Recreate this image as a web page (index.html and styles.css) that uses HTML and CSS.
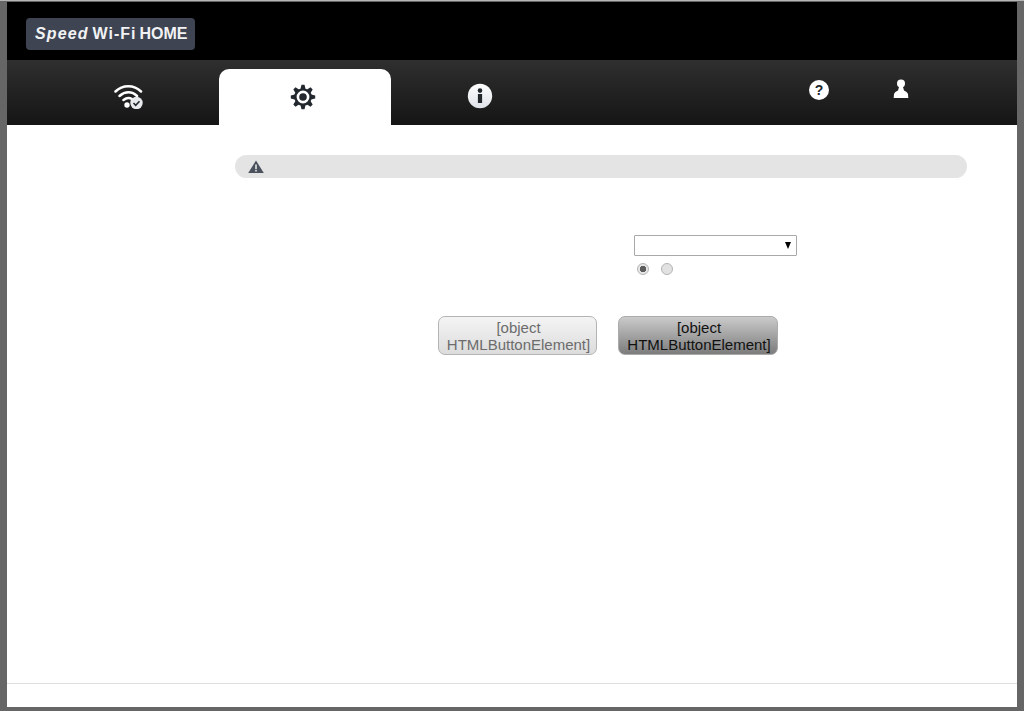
FILE: index.html
```html
<!DOCTYPE html>
<html lang="ja">
<head>
<meta charset="utf-8">
<title>Speed Wi-Fi HOME</title>
<link rel="stylesheet" href="styles.css">
</head>
<body>
<div class="frame">
  <header class="masthead">
    <div class="logo"><em class="logo-speed">Speed</em><span class="logo-wifi">Wi-Fi</span><span class="logo-home">HOME</span></div>
  </header>
  <nav class="nav">
    <a class="tab">
      <svg class="icon-wifi" width="30" height="26" viewBox="0 0 30 26">
        <path d="M1.500 8.500C8.500 1.500 20 1.500 27 8.500M5.500 13C11 8 18 8 23 13M9.500 17C12.500 14.500 15.500 14.500 18 16" fill="none" stroke="#fff" stroke-width="2.500" stroke-linecap="round"/>
        <circle cx="13" cy="22" r="2.700" fill="#fff"/>
        <circle cx="22.500" cy="20" r="6.200" fill="#e8eaee"/>
        <path d="M19.500 20l2.200 2.300 3.800-4" fill="none" stroke="#23262b" stroke-width="1.600"/>
      </svg>
    </a>
    <a class="tab tab-active">
      <svg class="icon-gear" width="26" height="26" viewBox="0 0 26 26">
        <g fill="#23272e">
          <path d="M11.500 .8h3l1.200 5h-5.400z"/>
          <path d="M11.500 .8h3l1.200 5h-5.400z" transform="rotate(45 13 13)"/>
          <path d="M11.500 .8h3l1.200 5h-5.400z" transform="rotate(90 13 13)"/>
          <path d="M11.500 .8h3l1.200 5h-5.400z" transform="rotate(135 13 13)"/>
          <path d="M11.500 .8h3l1.200 5h-5.400z" transform="rotate(180 13 13)"/>
          <path d="M11.500 .8h3l1.200 5h-5.400z" transform="rotate(225 13 13)"/>
          <path d="M11.500 .8h3l1.200 5h-5.400z" transform="rotate(270 13 13)"/>
          <path d="M11.500 .8h3l1.200 5h-5.400z" transform="rotate(315 13 13)"/>
        </g>
        <circle cx="13" cy="13" r="7.600" fill="#fff" stroke="#23272e" stroke-width="2.400"/>
        <circle cx="13" cy="13" r="3.800" fill="#23272e"/>
      </svg>
    </a>
    <a class="tab tab-info">
      <svg width="26" height="26" viewBox="0 0 26 26">
        <defs><linearGradient id="ig" x1="0" y1="0" x2="0" y2="1"><stop offset="0" stop-color="#fff"/><stop offset="1" stop-color="#dfe2ea"/></linearGradient></defs>
        <circle cx="13" cy="13" r="12.200" fill="url(#ig)"/>
        <circle cx="13" cy="7.600" r="2.300" fill="#23262b"/>
        <rect x="10.900" y="11" width="4.200" height="9" fill="#23262b"/>
      </svg>
    </a>
    <div class="nav-tools">
      <a class="tool tool-help">
        <svg width="22" height="22" viewBox="0 0 22 22">
          <circle cx="11" cy="11" r="10" fill="#fff"/>
          <text class="help-mark" x="11" y="15.600" text-anchor="middle">?</text>
        </svg>
      </a>
      <a class="tool tool-user">
        <svg width="16" height="20" viewBox="0 0 16 20">
          <circle cx="8" cy="4.600" r="4" fill="#fff"/>
          <path d="M6 8h4l1 3.600c2 .8 3.400 2 4 3.400l.3 4H.7l.3-4c.6-1.400 2-2.600 4-3.400z" fill="#fff"/>
        </svg>
      </a>
    </div>
  </nav>
  <main class="main">
    <div class="notice">
      <svg width="16" height="13" viewBox="0 0 16 13">
        <path d="M8 .5 15.800 13H.2z" fill="#4b525e"/>
        <rect x="7.200" y="4.500" width="1.600" height="4.500" fill="#e4e4e4"/>
        <rect x="7.200" y="9.800" width="1.600" height="1.700" fill="#e4e4e4"/>
      </svg>
    </div>
    <div class="form">
      <div class="select"><span class="select-arrow"></span></div>
      <div class="radios">
        <span class="radio radio-on"></span>
        <span class="radio"></span>
      </div>
    </div>
    <div class="actions">
      <button class="btn btn-light" type="button">[object HTMLButtonElement]</button>
      <button class="btn btn-dark" type="button">[object HTMLButtonElement]</button>
    </div>
    <div class="spacer"></div>
    <footer class="footer"></footer>
  </main>
</div>
</body>
</html>
```
FILE: styles.css
```css
* { box-sizing: border-box; }
html, body { margin: 0; height: 100%; }
body { background: #666; font-family: "Liberation Sans", Arial, sans-serif; overflow: hidden; }
.frame {
  height: 711px;
  padding: 1px 7px 4px;
  display: flex;
  flex-direction: column;
  border-top: 1px solid #b5b5b5;
}
.masthead { height: 58px; background: #000; padding: 16px 0 0 19px; flex: none; }
.logo {
  width: 169px;
  height: 32px;
  background: #3e4452;
  border-radius: 4px;
  color: #f1f2f4;
  font-weight: 700;
  font-size: 16px;
  line-height: 32px;
  padding-left: 9px;
  display: flex;
  white-space: nowrap;
}
.logo-speed { font-style: italic; letter-spacing: 1.100px; margin-right: 4px; }
.logo-wifi { margin-right: 3px; letter-spacing: 1px; }
.logo-home { letter-spacing: 0; }
.nav {
  height: 65px;
  flex: none;
  display: flex;
  align-items: flex-end;
  gap: 4px;
  padding-left: 36px;
  background: linear-gradient(#2f2f2f, #151515);
}
.tab {
  width: 172px;
  height: 56px;
  display: flex;
  justify-content: center;
  padding-top: 14px;
  padding-right: 1px;
  border-radius: 10px 10px 0 0;
}
.tab-active { background: #fff; padding-right: 4px; padding-top: 15px; }
.tab-info { padding-right: 2px; }
.nav-tools { display: flex; align-self: flex-start; padding: 19px 0 0 237px; }
.tool { display: block; }
.tool-user { margin-left: 63px; }
.help-mark { font: 700 14px "Liberation Sans", sans-serif; fill: #23262b; }
.main { flex: 1; background: #fff; display: flex; flex-direction: column; }
.notice {
  margin: 30px 50px 0 228px;
  height: 23px;
  background: #e4e4e4;
  border-radius: 12px;
  padding: 5px 0 0 13px;
  flex: none;
}
.notice svg { display: block; }
.form { padding: 57px 0 0 627px; flex: none; }
.select {
  width: 163px;
  height: 21px;
  background: #fff;
  border: 1px solid #a9a9a9;
  border-radius: 1px;
  display: flex;
  justify-content: flex-end;
  align-items: center;
  padding-right: 5px;
}
.select-arrow {
  width: 0;
  height: 0;
  border-left: 3.500px solid transparent;
  border-right: 3.500px solid transparent;
  border-top: 7px solid #000;
}
.radios { display: flex; gap: 12px; padding: 7px 0 0 3px; }
.radio {
  width: 12px;
  height: 12px;
  border-radius: 50%;
  border: 1px solid #b4b4b4;
  background: #e2e2e2;
}
.radio-on { background: radial-gradient(circle, #5c5c5c 0 3px, #e6e6e6 3.500px); }
.actions { display: flex; gap: 21px; padding: 41px 0 0 431px; flex: none; }
.btn {
  width: 160px;
  height: 39px;
  padding: 0 3px 0 5px;
  border-radius: 7px;
  font: 15px/17px "Liberation Sans", Arial, sans-serif;
  text-align: center;
  display: block;
}
.btn-light {
  width: 159px;
  color: #6c6c6c;
  background: linear-gradient(#f4f4f4, #dcdcdc);
  border: 1px solid #b4b4b4;
}
.btn-dark {
  color: #111;
  background: linear-gradient(#cacaca, #7c7c7c);
  border: 1px solid #ababab;
}
.spacer { flex: 1; }
.footer { height: 24px; border-top: 1px solid #dedede; flex: none; }
```
